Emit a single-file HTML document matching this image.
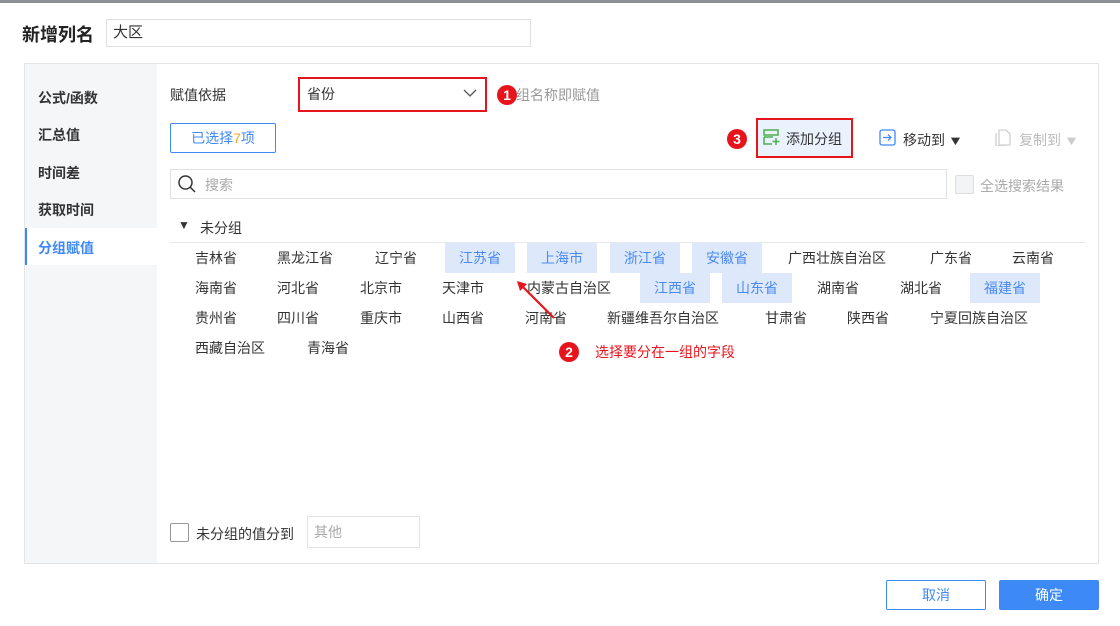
<!DOCTYPE html>
<html><head><meta charset="utf-8"><style>
*{margin:0;padding:0;box-sizing:border-box}
body{width:1120px;height:626px;background:#fff;position:relative;overflow:hidden;font-family:"Liberation Sans","Noto Sans CJK SC",sans-serif;font-size:14px;color:#333}
.a{position:absolute;white-space:nowrap}
.it{position:absolute;height:30px;line-height:30px;font-size:14px;color:#333}
.hl{background:#dde9fb;color:#4a8af0;width:70px;text-align:center}
.badge{position:absolute;width:20px;height:20px;border-radius:50%;background:#e8141c;color:#fff;font-size:14px;line-height:20px;text-align:center;font-weight:bold}
.tri{font-size:13px;display:inline-block;transform:scaleX(1.2)}
</style></head><body>
<div class="a" style="left:0;top:0;width:1120px;height:3px;background:#8e9097"></div>
<div class="a" style="left:22px;top:21px;font-size:18px;font-weight:bold;color:#222">新增列名</div>
<div class="a" style="left:106px;top:19px;width:425px;height:28px;border:1px solid #dcdfe6;padding-left:6px;line-height:26px;font-size:15px">大区</div>

<div class="a" style="left:24px;top:63px;width:1075px;height:501px;border:1px solid #e2e4e8"></div>
<div class="a" style="left:25px;top:64px;width:132px;height:499px;background:#f5f6f8"></div>
<div class="a" style="left:38px;top:88px;font-weight:bold">公式/函数</div>
<div class="a" style="left:38px;top:125px;font-weight:bold">汇总值</div>
<div class="a" style="left:38px;top:163px;font-weight:bold">时间差</div>
<div class="a" style="left:38px;top:200px;font-weight:bold">获取时间</div>
<div class="a" style="left:25px;top:228px;width:132px;height:37px;background:#fff;border-left:2px solid #3d8af7"></div>
<div class="a" style="left:38px;top:238px;font-weight:bold;color:#3d8af7">分组赋值</div>

<div class="a" style="left:170px;top:85px">赋值依据</div>
<div class="a" style="left:298px;top:77px;width:189px;height:35px;border:2px solid #e8141c;padding-left:7px;line-height:31px">省份
<svg style="position:absolute;right:8px;top:9px" width="14" height="10"><path d="M1 2 L7 8 L13 2" stroke="#555" stroke-width="1.3" fill="none"/></svg></div>
<div class="badge" style="left:497px;top:85px">1</div>
<div class="a" style="left:516px;top:85px;color:#999">组名称即赋值</div>

<div class="a" style="left:170px;top:123px;width:106px;height:30px;border:1px solid #3d8af7;border-radius:2px;color:#3d8af7;text-align:center;line-height:28px">已选择<span style="color:#f5a623">7</span>项</div>

<div class="badge" style="left:727px;top:129px">3</div>
<div class="a" style="left:756px;top:118px;width:97px;height:40px;border:2px solid #e8141c;background:#eaf2fd"></div>
<svg class="a" style="left:762px;top:128px" width="18" height="18"><path d="M2 2h14v5H2zM2 9h9M2 9v7h8M14 10v7M10.5 13.5h7" stroke="#4cb050" stroke-width="1.5" fill="none"/></svg>
<div class="a" style="left:786px;top:129px">添加分组</div>
<svg class="a" style="left:879px;top:129px" width="17" height="17"><rect x="1" y="1" width="15" height="15" rx="2" stroke="#3d8af7" stroke-width="1.3" fill="none"/><path d="M4 8.5h8M9 5.5l3 3-3 3" stroke="#3d8af7" stroke-width="1.3" fill="none"/></svg>
<div class="a" style="left:903px;top:130px">移动到 <span class="tri">▼</span></div>
<svg class="a" style="left:995px;top:129px" width="16" height="17"><path d="M4 1h7l4 4v11H4zM1 4v13h10" stroke="#d0d0d0" stroke-width="1.3" fill="none"/></svg>
<div class="a" style="left:1019px;top:130px;color:#bbb">复制到 <span class="tri" style="color:#ccc">▼</span></div>

<div class="a" style="left:170px;top:169px;width:777px;height:30px;border:1px solid #dcdfe6"></div>
<svg class="a" style="left:177px;top:174px" width="20" height="20"><circle cx="8.5" cy="8.5" r="6.5" stroke="#333" stroke-width="1.5" fill="none"/><path d="M13 13l5 5" stroke="#333" stroke-width="1.5"/></svg>
<div class="a" style="left:205px;top:175px;color:#aaa">搜索</div>
<div class="a" style="left:955px;top:175px;width:19px;height:19px;border:1px solid #ddd;background:#f3f4f6;border-radius:2px"></div>
<div class="a" style="left:980px;top:176px;color:#aaa">全选搜索结果</div>

<div class="a" style="left:178px;top:218px;font-size:12px">▼</div>
<div class="a" style="left:200px;top:218px">未分组</div>
<div class="a" style="left:170px;top:242px;width:915px;height:1px;background:#e6e8eb"></div>

<div class="it" style="left:195px;top:243px">吉林省</div>
<div class="it" style="left:277px;top:243px">黑龙江省</div>
<div class="it" style="left:375px;top:243px">辽宁省</div>
<div class="it hl" style="left:445px;top:243px">江苏省</div>
<div class="it hl" style="left:527px;top:243px">上海市</div>
<div class="it hl" style="left:610px;top:243px">浙江省</div>
<div class="it hl" style="left:692px;top:243px">安徽省</div>
<div class="it" style="left:788px;top:243px">广西壮族自治区</div>
<div class="it" style="left:930px;top:243px">广东省</div>
<div class="it" style="left:1012px;top:243px">云南省</div>

<div class="it" style="left:195px;top:273px">海南省</div>
<div class="it" style="left:277px;top:273px">河北省</div>
<div class="it" style="left:360px;top:273px">北京市</div>
<div class="it" style="left:442px;top:273px">天津市</div>
<div class="it" style="left:527px;top:273px">内蒙古自治区</div>
<div class="it hl" style="left:640px;top:273px">江西省</div>
<div class="it hl" style="left:722px;top:273px">山东省</div>
<div class="it" style="left:817px;top:273px">湖南省</div>
<div class="it" style="left:900px;top:273px">湖北省</div>
<div class="it hl" style="left:970px;top:273px">福建省</div>

<div class="it" style="left:195px;top:303px">贵州省</div>
<div class="it" style="left:277px;top:303px">四川省</div>
<div class="it" style="left:360px;top:303px">重庆市</div>
<div class="it" style="left:442px;top:303px">山西省</div>
<div class="it" style="left:525px;top:303px">河南省</div>
<div class="it" style="left:607px;top:303px">新疆维吾尔自治区</div>
<div class="it" style="left:765px;top:303px">甘肃省</div>
<div class="it" style="left:847px;top:303px">陕西省</div>
<div class="it" style="left:930px;top:303px">宁夏回族自治区</div>

<div class="it" style="left:195px;top:333px">西藏自治区</div>
<div class="it" style="left:307px;top:333px">青海省</div>

<svg class="a" style="left:512px;top:278px" width="45" height="42"><path d="M42 40L7 5" stroke="#e8141c" stroke-width="2.2"/><path d="M5 3l10 3-7 7z" fill="#e8141c"/></svg>
<div class="badge" style="left:559px;top:342px">2</div>
<div class="a" style="left:595px;top:342px;color:#e8141c">选择要分在一组的字段</div>

<div class="a" style="left:170px;top:523px;width:19px;height:19px;border:1px solid #999;border-radius:2px"></div>
<div class="a" style="left:196px;top:524px">未分组的值分到</div>
<div class="a" style="left:307px;top:516px;width:113px;height:32px;border:1px solid #e2e4e8;padding-left:6px;line-height:30px;color:#aaa">其他</div>

<div class="a" style="left:886px;top:580px;width:100px;height:30px;border:1px solid #3d8af7;border-radius:2px;color:#3d8af7;text-align:center;line-height:28px">取消</div>
<div class="a" style="left:999px;top:580px;width:100px;height:30px;background:#3d8af7;border-radius:2px;color:#fff;text-align:center;line-height:30px">确定</div>
</body></html>
